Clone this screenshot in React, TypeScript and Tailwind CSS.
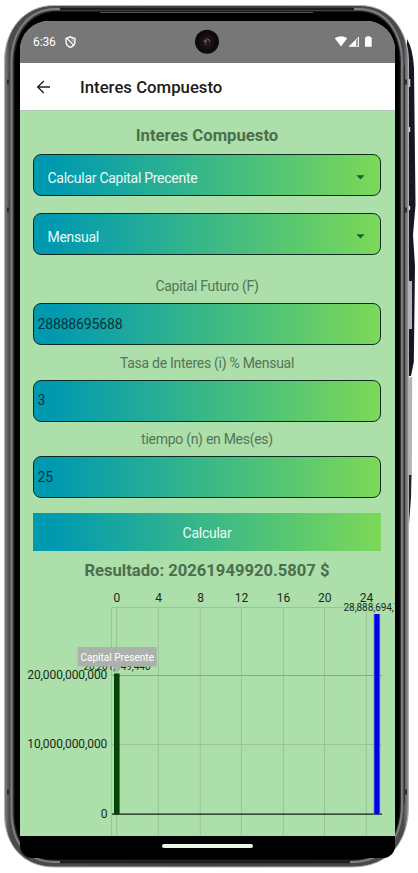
import React from "react";

const FIELD =
  "flex h-[42px] w-[348px] items-center rounded-[8px] border border-[#0d2b20] bg-linear-to-r/srgb from-[#009ab0] from-6% to-[#7cd958]";

function Select({ value, className }: { value: string; className: string }) {
  return (
    <div className={`${FIELD} justify-between pl-[13.5px] pr-[15px] ${className}`}>
      <span className="pt-[6px] text-[14px] leading-none tracking-[-0.28px] text-[#e9fbf8]">{value}</span>
      <svg width="9" height="5" viewBox="0 0 9 5" className="mt-[4px]">
        <path d="M0.4 0.3H8.6L4.5 4.5Z" fill="#1f5c2b" />
      </svg>
    </div>
  );
}

function Field({ label, value, labelClass, boxClass }: { label: string; value: string; labelClass: string; boxClass: string }) {
  return (
    <div className="flex flex-col items-center">
      <div className={`flex h-4 items-center whitespace-nowrap text-[14px] tracking-[-0.28px] text-[#557557] ${labelClass}`}>{label}</div>
      <div className={`${FIELD} pl-[3.5px] text-[14px] tracking-[-0.15px] text-[#06343a] ${boxClass}`}>{value}</div>
    </div>
  );
}

const XS = [116.7, 158.4, 200.3, 241.4, 283.4, 324.5, 366.4];

function Chart() {
  return (
    <svg width="375" height="249" viewBox="20 587 375 249" className="-ml-px block font-[Roboto,sans-serif]">
      <g stroke="#99bf98" strokeWidth="0.9">
        <path d="M111.5 607.5V836M111.5 607.5H382" />
        {XS.map((x) => (
          <path key={x} d={`M${x} 607.5V836`} />
        ))}
        <path d="M111.5 744.5H382" />
        <path d="M111.5 675.5H382" stroke="#83a483" />
      </g>
      <path d="M112 814.2H382" stroke="#10200f" strokeWidth="1.2" />
      <g fontSize="12" fill="#1b2a19" textAnchor="middle">
        {XS.map((x, i) => (
          <text key={x} x={x + 0.2} y="602">{i * 4}</text>
        ))}
      </g>
      <g fontSize="12" fill="#1b2a19" textAnchor="end">
        <text x="107.3" y="679" textLength="80">20,000,000,000</text>
        <text x="107.3" y="748" textLength="80">10,000,000,000</text>
        <text x="107.5" y="818">0</text>
      </g>
      <g fontSize="10" fill="#1b2a19" textAnchor="middle">
        <text x="117" y="670" textLength="67">20,261,949,440</text>
        <text x="377" y="610.5" textLength="67">28,888,694,784</text>
      </g>
      <rect x="114" y="673.5" width="5.6" height="141" fill="#044404" />
      <rect x="373.6" y="614" width="6.6" height="200.3" fill="#6c80df" />
      <rect x="374.4" y="614" width="5" height="200.3" fill="#0000e4" />
      <path d="M77.6 647H156.8V666.6H121L117 672.8L113 666.6H77.6Z" fill="#adb1ad" />
      <text x="117.2" y="661" fontSize="10" fill="#fff" textAnchor="middle" textLength="73.5">Capital Presente</text>
    </svg>
  );
}

function StatusBar() {
  return (
    <div className="relative flex h-[42px] items-center bg-[#777777] pl-[13px] text-white">
      <span className="w-[23px] text-[12px] tracking-[-0.1px]">6:36</span>
      <svg width="11" height="12" viewBox="0 0 11 12" className="ml-[8.5px]" fill="none" stroke="#fff" strokeWidth="1.3">
        <path d="M5.5 0.8L10 2.4V5.5C10 8.4 8 10.5 5.5 11.3C3 10.5 1 8.4 1 5.5V2.4ZM2 2.4L9 9.6" />
        <path d="M5.5 1.2L9.7 2.6V6L7.8 6.8Z" fill="#fff" stroke="none" opacity=".35" />
      </svg>
      <svg width="38" height="12" viewBox="335 36 38 12" className="ml-auto mr-[22px]" fill="#fff">
        <path d="M334.8 38.2Q341 34.3 347.2 38.2L341 46.5Z" />
        <path d="M348.4 46.8L359 36.6V46.8Z" />
        <path d="M356 40.2L358.1 38.2V46H356Z" fill="#999" />
        <path d="M365 37.2H366.5V36.2H370V37.2H371.7V46.8H365Z" />
      </svg>
      <svg width="26" height="26" viewBox="0 0 26 26" className="absolute left-[174px] top-[8px]">
        <circle cx="13" cy="12.7" r="12" fill="#0c0c0e" />
        <circle cx="13" cy="12.7" r="7.5" fill="#151317" />
        <circle cx="13" cy="12.7" r="4.2" fill="#2c171d" />
        <circle cx="11.4" cy="12" r="1.5" fill="#79525b" />
        <path d="M12.5 9.8Q16 10 16 13" fill="none" stroke="#80535c" />
        <circle cx="11.5" cy="15" r=".8" fill="#5c4967" />
      </svg>
    </div>
  );
}

/* Device edge: side keys, chamfers and antenna seams */
function Bezel() {
  return (
    <svg width="418" height="873" viewBox="0 0 418 873" className="absolute inset-0">
      <defs>
        <linearGradient id="rail">
          <stop offset="0" stopColor="#858585" />
          <stop offset=".012" stopColor="#4b4b4b" />
          <stop offset=".5" stopColor="#444" />
          <stop offset=".988" stopColor="#4b4949" />
          <stop offset="1" stopColor="#999" />
        </linearGradient>
      </defs>
      <path d="M407 39Q413 49 414 68L415.5 205L413 235L415 266L413.8 362L411 376H407Z" fill="#171722" />
      <path d="M409 281H412V329H409ZM409 377H412.2L411.8 476H409Z" fill="#b4b2b5" />
      <path d="M409 475H411.5L411 498L409 524Z" fill="#24232c" />
      <path d="M54 5.5H360C391 5.5 408.5 32 408.5 62V806C408.5 842 389 867 352 867H54C24 867 4.5 846 4.5 814V61C4.5 30 24 5.5 54 5.5Z" fill="url(#rail)" stroke="#b0b0b0" />
      <path d="M409.6 79V87M409.6 127V132M409.6 206V210M409.6 377V379" stroke="#d0d0d0" strokeWidth="1.2" />
      <path d="M56 9H358C388 9 402 34 402 62V805C402 840 383 862 352 862H55C28 862 11.5 844 11.5 812V62C11.5 32 28 9 56 9Z" fill="none" stroke="#808080" strokeWidth="1.8" />
      <path d="M56 11.5H358C386 11.5 400 35 400 62V805C400 838 383 860 352 860H55C28 860 14 842 14 812V62C14 34 30 11.5 56 11.5Z" fill="#000" stroke="#171717" />
      <path d="M60 9H354M60 862H350" stroke="#1e1e1e" strokeWidth="2.4" />
      <path d="M100 12.5H313" stroke="#555" strokeWidth="1" />
      <path d="M404.5 65V804" stroke="#333" strokeWidth="1" />
      <path d="M7 82H9M7 210H9M7 792H9M405 82H407M405 210H407M405 792H407" stroke="#2c2c2c" strokeWidth="5" />
    </svg>
  );
}

export default function App() {
  return (
    <div className="relative h-[873px] w-[418px] overflow-hidden bg-white font-[Roboto,sans-serif]">
      <Bezel />
      <div className="relative ml-[20px] pt-[21px]">
        <div className="h-[815px] w-[375px] overflow-hidden rounded-t-[29px] bg-[#acdfaa]">
          <StatusBar />
          <header className="flex h-[47px] items-center bg-white pl-[16px]">
            <svg width="15" height="14" viewBox="0 0 15 14" fill="none" stroke="#202020" strokeWidth="1.35">
              <path d="M14 7H1.8M7.8 .9L1.7 7L7.8 13.1" />
            </svg>
            <h1 className="ml-[29px] pt-[2px] text-[16.75px] font-medium text-[#1c1c1c]">Interes Compuesto</h1>
          </header>
          <main className="flex h-[726px] flex-col items-center border-t border-[#b0c8af] pr-px">
            <h2 className="mt-[15px] flex h-5 items-center text-[16.7px] font-bold text-[#4a6f4d]">Interes Compuesto</h2>
            <Select value="Calcular Capital Precente" className="mt-[8px]" />
            <Select value="Mensual" className="mt-[17px]" />
            <Field label="Capital Futuro (F)" value="28888695688" labelClass="mt-[23px]" boxClass="mt-[9px]" />
            <Field label="Tasa de Interes (i) % Mensual" value="3" labelClass="mt-[10px]" boxClass="mt-[8.5px]" />
            <Field label="tiempo (n) en Mes(es)" value="25" labelClass="mt-[10px]" boxClass="mt-[8.5px]" />
            <button className="mt-[15px] flex h-[38px] w-[348px] items-center justify-center bg-linear-to-r/srgb from-[#009ab0] from-6% to-[#7cd958] pt-[2px] text-[14px] tracking-[-0.25px] text-[#effdf5]">
              Calcular
            </button>
            <div className="mt-[10px] flex h-5 items-center whitespace-nowrap text-[16.6px] font-bold text-[#4a6f4d]">Resultado: 20261949920.5807 $</div>
            <div className="-mr-px mt-auto w-[375px] pl-px"><Chart /></div>
          </main>
        </div>
        <nav className="flex h-[22px] w-[375px] justify-center rounded-b-[12px] bg-black pt-[8px]">
          <div className="h-[4px] w-[91px] rounded-full bg-[#f2f2ee]" />
        </nav>
      </div>
    </div>
  );
}
